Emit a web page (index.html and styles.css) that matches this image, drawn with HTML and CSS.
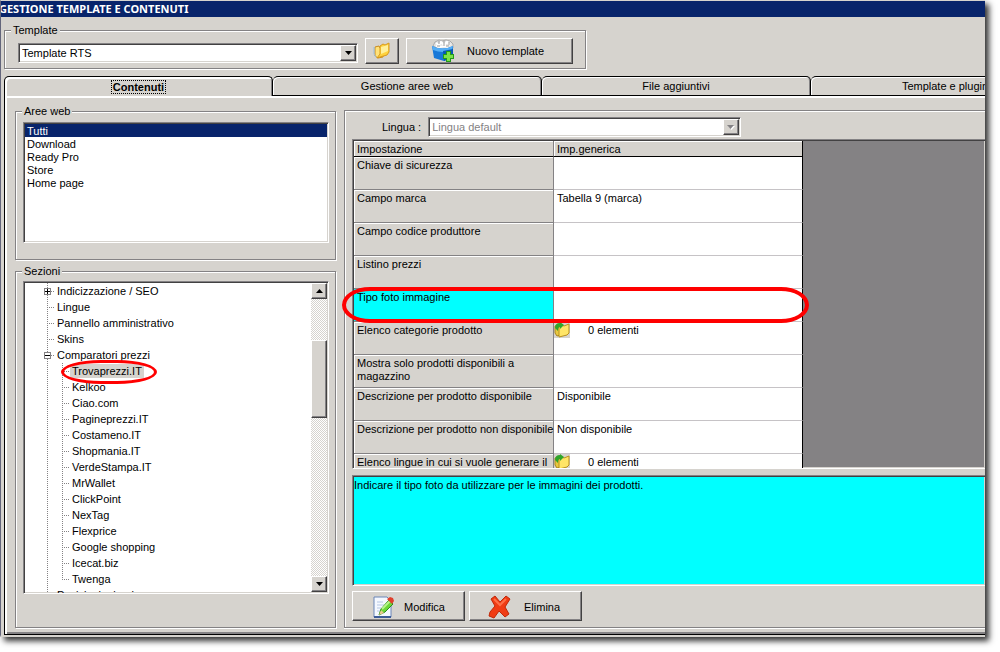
FILE: index.html
```html
<!DOCTYPE html>
<html lang="it">
<head>
    <meta charset="UTF-8">
    <meta name="viewport" content="width=device-width, initial-scale=1.0">
    <title>Gestione template e contenuti</title>
    <link rel="stylesheet" href="styles.css">
</head>
<body>

    <div class="window">
        <h1 class="title-bar">GESTIONE TEMPLATE E CONTENUTI</h1>

        <fieldset class="group template-group">
            <legend>Template</legend>
            <div class="template-row">
                <div class="combo template-combo">
                    <select aria-label="Template">
                        <option>Template RTS</option>
                    </select>
                    <span class="combo-arrow"><svg width="7" height="4" viewBox="0 0 7 4"><path d="M0 0h7L3.500 4z"/></svg></span>
                </div>
                <button class="button folder-button" type="button" aria-label="Apri cartella">
                    <svg width="18" height="18" viewBox="0 0 18 18">
                        <path d="M2 5l4-1 1 2 4-1-1 10-5 1-3-2z" fill="#ffe27a" stroke="#c88a20"/>
                        <path d="M7 4l3-2 2 1 4-2v9l-2 3-7 2-3 1 3-4z" fill="#ffd23c" stroke="#d79a1e"/>
                        <path d="M8 5l7-2v6l-7 3z" fill="#fff09a"/>
                        <path d="M1 5v7l2 3" fill="none" stroke="#9bbfe0"/>
                    </svg>
                </button>
                <button class="button new-button" type="button">
                    <svg width="24" height="24" viewBox="0 0 24 24">
                        <path d="M2 7l2-4 4-2 3 1 4-1 4 1 3 3v4l-10 3z" fill="#e4e4e4" stroke="#aaa"/>
                        <path d="M5 4l3 2 2-3 3 3 3-3 3 3M5 7l4 1 4-1 5 1" fill="none" stroke="#fff" stroke-width="2"/>
                        <path d="M8 2v3M13 2v5M18 3v3M6 7h3M15 7h3" stroke="#999"/>
                        <path d="M1 7q10 5 21 0v11l-9 4-10-3z" fill="#1878d8"/>
                        <path d="M1 7q10 5 21 0l-1 4q-9 4-19 0z" fill="#55aef5"/>
                        <path d="M12 12l1 10 9-4v-8z" fill="#0a58b4"/>
                        <path d="M15 12h5v3h3v5h-3v3h-5v-3h-3v-5h3z" fill="#239b18"/>
                        <path d="M16 13h3v3h3v3h-3v3h-3v-3h-3v-3h3z" fill="#7be34a"/>
                    </svg>
                    <span>Nuovo template</span>
                </button>
            </div>
        </fieldset>

        <nav class="tabs">
            <button class="tab active" type="button"><span>Contenuti</span></button>
            <button class="tab" type="button">Gestione aree web</button>
            <button class="tab" type="button">File aggiuntivi</button>
            <button class="tab" type="button">Template e plugin</button>
        </nav>

        <main class="tab-panel">
            <div class="sidebar">
                <fieldset class="group areas-group">
                    <legend>Aree web</legend>
                    <div class="group-body">
                        <select class="list-box" size="9" aria-label="Aree web">
                            <option selected>Tutti</option>
                            <option>Download</option>
                            <option>Ready Pro</option>
                            <option>Store</option>
                            <option>Home page</option>
                        </select>
                    </div>
                </fieldset>

                <fieldset class="group sections-group">
                    <legend>Sezioni</legend>
                    <div class="group-body">
                        <div class="tree-box">
                            <ul class="tree">
                                <li class="expandable closed">Indicizzazione / SEO</li>
                                <li>Lingue</li>
                                <li>Pannello amministrativo</li>
                                <li>Skins</li>
                                <li class="expandable">Comparatori prezzi
                                    <ul>
                                        <li class="selected"><span>Trovaprezzi.IT</span></li>
                                        <li>Kelkoo</li>
                                        <li>Ciao.com</li>
                                        <li>Pagineprezzi.IT</li>
                                        <li>Costameno.IT</li>
                                        <li>Shopmania.IT</li>
                                        <li>VerdeStampa.IT</li>
                                        <li>MrWallet</li>
                                        <li>ClickPoint</li>
                                        <li>NexTag</li>
                                        <li>Flexprice</li>
                                        <li>Google shopping</li>
                                        <li>Icecat.biz</li>
                                        <li>Twenga</li>
                                    </ul>
                                </li>
                                <li>Posizioni minori</li>
                            </ul>
                            <div class="scrollbar">
                                <button type="button" aria-label="Su"><svg width="7" height="4" viewBox="0 0 7 4"><path d="M0 4h7L3.500 0z"/></svg></button>
                                <div class="thumb"></div>
                                <button type="button" aria-label="Giù"><svg width="7" height="4" viewBox="0 0 7 4"><path d="M0 0h7L3.500 4z"/></svg></button>
                            </div>
                        </div>
                    </div>
                </fieldset>
            </div>

            <section class="settings">
                <div class="language-row">
                    <label for="lingua">Lingua :</label>
                    <div class="combo language-combo disabled">
                        <select id="lingua" disabled>
                            <option>Lingua default</option>
                        </select>
                        <span class="combo-arrow"><svg width="8" height="5" viewBox="0 0 8 5"><path d="M1 1h7L4.500 5z" fill="#fff"/><path d="M0 0h7L3.500 4z" fill="#848284"/></svg></span>
                    </div>
                </div>

                <div class="grid-wrap">
                    <div class="grid">
                        <table>
                            <thead>
                                <tr><th>Impostazione</th><th>Imp.generica</th></tr>
                            </thead>
                            <tbody>
                                <tr><th>Chiave di sicurezza</th><td></td></tr>
                                <tr><th>Campo marca</th><td>Tabella 9 (marca)</td></tr>
                                <tr><th>Campo codice produttore</th><td></td></tr>
                                <tr><th>Listino prezzi</th><td></td></tr>
                                <tr class="current"><th>Tipo foto immagine</th><td></td></tr>
                                <tr>
                                    <th>Elenco categorie prodotto</th>
                                    <td class="with-icon">
                                        <svg width="16" height="16" viewBox="0 0 16 16">
                                            <path d="M0 0h16v16H0z" fill="#d6d3ce"/>
                                            <path d="M1 4l5-1v10l-3 1-2-3z" fill="#e8c840" stroke="#a88420"/>
                                            <path d="M5 5l3-2 2 1 5-2v9l-2 2-8 2z" fill="#ffe566" stroke="#b8901c"/>
                                            <path d="M1 6q0-5 5-5V0l4 3-4 4V5Q4 5 4 9z" fill="#2fa52a"/>
                                        </svg>
                                        <span>0 elementi</span>
                                    </td>
                                </tr>
                                <tr><th>Mostra solo prodotti disponibili a<br>magazzino</th><td></td></tr>
                                <tr><th>Descrizione per prodotto disponibile</th><td>Disponibile</td></tr>
                                <tr><th>Descrizione per prodotto non disponibile</th><td>Non disponibile</td></tr>
                                <tr>
                                    <th>Elenco lingue in cui si vuole generare il</th>
                                    <td class="with-icon">
                                        <svg width="16" height="16" viewBox="0 0 16 16">
                                            <path d="M0 0h16v16H0z" fill="#d6d3ce"/>
                                            <path d="M1 4l5-1v10l-3 1-2-3z" fill="#e8c840" stroke="#a88420"/>
                                            <path d="M5 5l3-2 2 1 5-2v9l-2 2-8 2z" fill="#ffe566" stroke="#b8901c"/>
                                            <path d="M1 6q0-5 5-5V0l4 3-4 4V5Q4 5 4 9z" fill="#2fa52a"/>
                                        </svg>
                                        <span>0 elementi</span>
                                    </td>
                                </tr>
                            </tbody>
                        </table>
                    </div>
                    <div class="row-marker"></div>
                </div>

                <div class="help-box">Indicare il tipo foto da utilizzare per le immagini dei prodotti.</div>

                <div class="actions">
                    <button class="button action-button" type="button">
                        <svg width="24" height="24" viewBox="0 0 24 24">
                            <path d="M3 2h13l4 4v16H3z" fill="#f4f8ff" stroke="#6a86b8"/>
                            <path d="M3 22h17" stroke="#3c5c98" stroke-width="2"/>
                            <path d="M6 7h6M6 10h7M6 13h4M6 16h3" stroke="#b4c6e4"/>
                            <path d="M8 20l2-6 8-9 4 4-8 8z" fill="#6cd838" stroke="#2f8a1a"/>
                            <path d="M11 14l8-8" stroke="#b8f58c" stroke-width="2"/>
                            <path d="M8 20l2-5 3 3z" fill="#e8c890"/>
                            <path d="M16 4l3-2 3 1 1 3-2 3z" fill="#e0402c"/>
                        </svg>
                        <span>Modifica</span>
                    </button>
                    <button class="button action-button delete-button" type="button">
                        <svg width="24" height="24" viewBox="0 0 24 24">
                            <path d="M3 4l4-3 5 6 6-6 4 3-5 8 4 7-4 3-6-6-5 7-5-2 1-4 5-6z" fill="#f03c14" stroke="#c02808" stroke-linejoin="round"/>
                            <path d="M6 4l6 6 6-6" fill="none" stroke="#ff7048" stroke-width="2"/>
                        </svg>
                        <span>Elimina</span>
                    </button>
                </div>
            </section>
        </main>
    </div>

</body>
</html>
```
FILE: styles.css
```css
*,
*::before,
*::after {
    box-sizing: border-box;
    margin: 0;
    padding: 0;
}

body {
    padding: 0 15px 15px 0;
    background: #fff;
    color: #000;
    font-family: "Liberation Sans", Arial, sans-serif;
    font-size: 11px;
    line-height: 13px;
}

button,
select {
    font: inherit;
    color: inherit;
}

svg {
    display: block;
    flex: none;
}

.window {
    background: #d6d3ce;
    border-top: 1px solid #d6d3ce;
    border-left: 1px solid #63657b;
    border-bottom: 2px solid #d6d3ce;
    overflow: hidden;
    box-shadow: 4px 4px 6px #333;
}

.title-bar {
    height: 16px;
    background: #08246b;
    color: #fff;
    font-family: "Noto Sans", sans-serif;
    font-size: 11px;
    font-weight: bold;
    line-height: 16px;
    text-indent: -2px;
    white-space: nowrap;
}

/* grouping boxes with an etched line */
.group {
    min-width: 0;
    border: 1px solid #848284;
    box-shadow: inset 1px 1px 0 #fff, 1px 1px 0 #fff;
}

.group legend {
    margin-left: 6px;
    padding: 0 2px;
    background: #d6d3ce;
}

.group-body {
    padding: 0 6px 0 7px;
}

.template-group {
    width: 582px;
    max-width: 100%;
    margin: 7px 0 0 3px;
}

.template-row {
    display: flex;
    align-items: flex-end;
    gap: 7px;
    padding: 1px 12px 4px 13px;
}

/* raised and sunken edges */
.button,
.combo-arrow,
.scrollbar button,
.thumb {
    background: #d6d3ce;
    border: 1px solid;
    border-color: #fff #424142 #424142 #fff;
    box-shadow: inset -1px -1px 0 #848284;
}

.combo,
.list-box,
.tree-box,
.grid,
.help-box {
    border: 1px solid;
    border-color: #848284 #fff #fff #848284;
    box-shadow: inset 1px 1px 0 #424142, inset -1px -1px 0 #d6d3ce;
}

.button {
    display: flex;
    align-items: center;
}

.folder-button {
    width: 34px;
    height: 26px;
    justify-content: center;
}

.new-button {
    width: 167px;
    height: 26px;
    padding-left: 24px;
    gap: 12px;
}

.combo {
    position: relative;
    height: 20px;
    padding: 1px;
    background: #fff;
}

.combo select {
    display: block;
    width: 100%;
    height: 16px;
    padding-left: 2px;
    appearance: none;
    background: #fff;
    border: none;
    border-radius: 0;
    opacity: 1;
}

.combo-arrow {
    position: absolute;
    top: 1px;
    right: 1px;
    bottom: 1px;
    width: 16px;
    display: flex;
    align-items: center;
    justify-content: center;
    pointer-events: none;
}

.disabled select {
    color: #848284;
}

.template-combo {
    flex: 1;
    margin-bottom: 1px;
}

.tabs {
    display: flex;
    margin: 7px 0 0 3px;
}

.tab {
    flex: 0 0 269px;
    height: 20px;
    padding-top: 1px;
    background: #d6d3ce;
    border: 1px solid #000;
    border-left-width: 0;
    border-radius: 5px 5px 0 0;
    box-shadow: inset 1px 1px 0 #fff, inset -1px 0 0 #848284;
}

.tab.active {
    border-left-width: 1px;
    border-bottom: none;
    font-weight: bold;
    box-shadow: inset 2px 2px 0 #fff, inset -1px 0 0 #848284;
}

.tab.active span {
    padding: 0 1px;
    outline: 1px dotted #000;
}

.tab-panel {
    display: flex;
    gap: 8px;
    padding: 9px 0 6px 10px;
    margin-left: 3px;
    border-left: 1px solid #000;
    border-bottom: 1px solid #000;
    box-shadow: inset 2px 2px 0 #fff, inset 0 -2px 0 #848284;
}

.sidebar {
    flex: 0 0 321px;
    display: flex;
    flex-direction: column;
    gap: 5px;
}

.areas-group {
    padding: 4px 0 16px;
}

.list-box {
    display: block;
    width: 100%;
    height: 121px;
    padding: 1px;
    background: #fff;
    border-radius: 0;
    outline: none;
    overflow: hidden;
}

.list-box option {
    min-height: 13px;
    padding: 1px 2px 0;
    line-height: 12px;
}

.list-box option:checked {
    background: linear-gradient(#08246b, #08246b);
    color: #fff;
}

.sections-group {
    flex: 1;
    padding: 3px 0 33px;
}

.tree-box {
    display: flex;
    height: 313px;
    padding: 1px;
    background: #fff;
    overflow: hidden;
}

.tree {
    flex: 1;
    padding-left: 22px;
    list-style: none;
    line-height: 16px;
    background: repeating-linear-gradient(#848284 0 1px, #fff 1px 2px) 22px 0 / 1px 100% no-repeat;
}

.tree li {
    position: relative;
    padding-left: 10px;
    background: repeating-linear-gradient(90deg, #848284 0 1px, #fff 1px 2px) 0 8px / 8px 1px no-repeat;
}

.tree ul {
    margin-left: 5px;
    list-style: none;
    background: repeating-linear-gradient(#848284 0 1px, #fff 1px 2px) 0 0 / 1px 217px no-repeat;
}

.tree .expandable::before {
    content: "";
    position: absolute;
    top: 5px;
    left: -3px;
    width: 7px;
    height: 7px;
    border: 1px solid #848284;
    background: linear-gradient(#000, #000) center / 5px 1px no-repeat, #fff;
}

.tree .closed::before {
    background: linear-gradient(#000, #000) center / 5px 1px no-repeat, linear-gradient(#000, #000) center / 1px 5px no-repeat, #fff;
}

.selected span {
    margin-left: -2px;
    padding: 1px 2px;
    background: #d6d3ce;
}

.selected::after {
    content: "";
    position: absolute;
    top: -3px;
    left: -1px;
    width: 96px;
    height: 24px;
    border: 3px solid #f00;
    border-radius: 40px / 12px;
    z-index: 1;
}

.scrollbar {
    flex: 0 0 16px;
    display: flex;
    flex-direction: column;
    background: repeating-conic-gradient(#fff 0 25%, #d6d3ce 0 50%) 0 0 / 2px 2px;
}

.scrollbar button {
    display: flex;
    align-items: center;
    justify-content: center;
    height: 16px;
}

.thumb {
    height: 78px;
    margin: 41px 0 auto;
}

.settings {
    flex: 1;
    min-width: 0;
    margin-top: 5px;
    padding: 6px 0 6px 7px;
    border: 1px solid #848284;
    border-right: none;
    box-shadow: inset 1px 1px 0 #fff, 0 1px 0 #fff;
}

.language-row {
    display: flex;
    align-items: center;
    gap: 7px;
    padding-left: 30px;
}

.language-combo {
    width: 313px;
}

.grid-wrap {
    position: relative;
    margin-top: 2px;
}

.grid {
    height: 330px;
    padding: 1px;
    border-right: none;
    background: #848284;
    overflow: hidden;
}

.grid table {
    width: 449px;
    table-layout: fixed;
    border-collapse: separate;
    border-spacing: 0;
}

.grid th,
.grid td {
    padding: 2px 0 0 3px;
    font-weight: normal;
    text-align: left;
    vertical-align: top;
    white-space: nowrap;
}

.grid th {
    width: 200px;
    background: #d6d3ce;
    border-right: 1px solid #848284;
    border-bottom: 1px solid #848284;
    box-shadow: inset 1px 1px 0 #fff;
}

.grid thead th {
    height: 16px;
    border-bottom-color: #000;
}

.grid thead th + th {
    width: 249px;
    border-right-color: #000;
}

.grid tbody tr {
    height: 33px;
}

.grid td {
    background: #fff;
    border-right: 1px solid #000;
    border-bottom: 1px solid #c6c3c6;
}

.grid .current th {
    background: #0ff;
    box-shadow: none;
}

.grid .with-icon {
    padding: 0;
}

.with-icon svg {
    float: left;
    margin-right: 18px;
}

.with-icon span {
    display: block;
    padding-top: 2px;
}

.row-marker {
    position: absolute;
    top: 148px;
    left: -10px;
    width: 467px;
    height: 36px;
    border: 4px solid #f00;
    border-radius: 28px / 18px;
    pointer-events: none;
}

.help-box {
    height: 111px;
    margin-top: 6px;
    padding: 3px 1px;
    border-right: none;
    background: #0ff;
}

.actions {
    display: flex;
    gap: 4px;
    margin-top: 5px;
}

.action-button {
    width: 113px;
    height: 30px;
    padding: 2px 0 0 18px;
    gap: 9px;
}

.delete-button {
    gap: 12px;
}
```
